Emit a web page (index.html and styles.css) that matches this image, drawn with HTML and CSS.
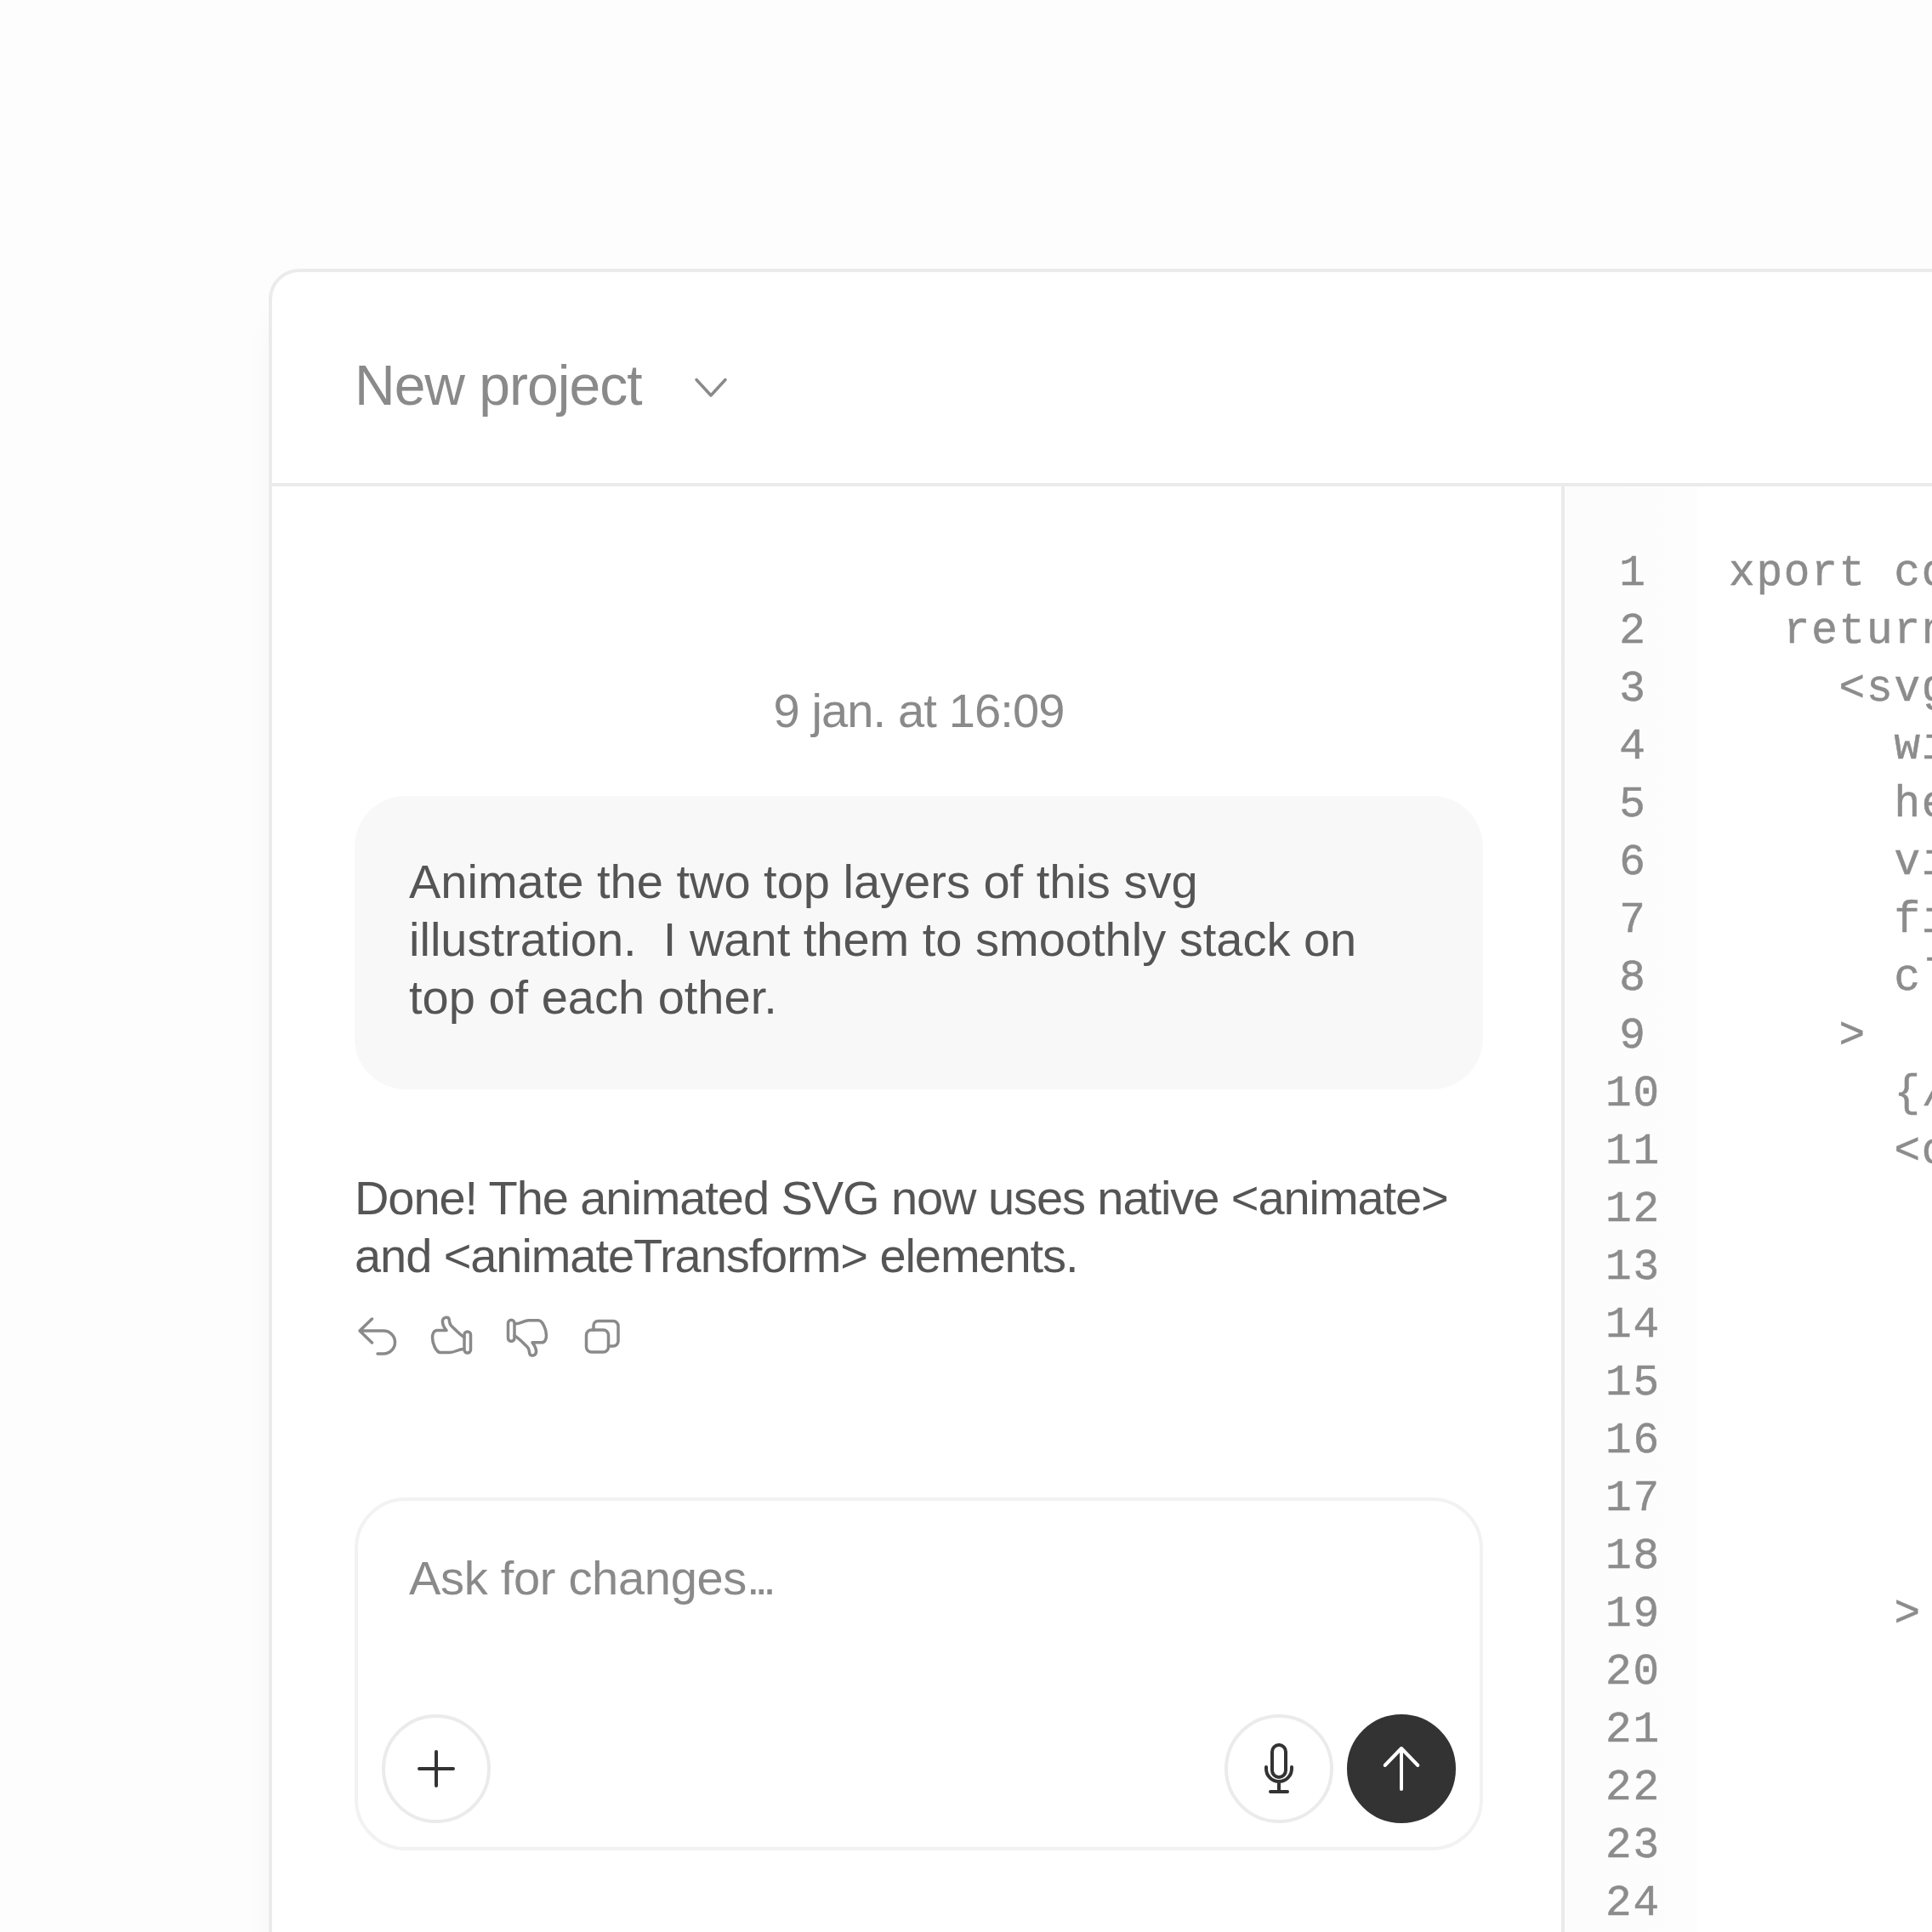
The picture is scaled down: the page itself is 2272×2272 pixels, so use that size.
FILE: index.html
```html
<!DOCTYPE html>
<html lang="en">
<head>
<meta charset="utf-8">
<title>New project</title>
<link rel="stylesheet" href="styles.css">
</head>
<body>
<div class="frame">
  <header class="topbar">
    <span class="project">New project</span>
    <svg class="chevron" viewBox="0 0 64 64" width="64" height="64" fill="none"><path d="M15 25.5L32 44L49 25.5"/></svg>
  </header>
  <div class="panes">
    <section class="chat">
      <div class="date">9 jan. at 16:09</div>
      <div class="bubble">Animate the two top layers of this svg<br>illustration.&nbsp; I want them to smoothly stack on<br>top of each other.</div>
      <p class="reply">Done! The animated SVG now uses native &lt;animate&gt;<br>and &lt;animateTransform&gt; elements.</p>
      <div class="actions">
        <svg class="act" viewBox="0 0 64 64" width="64" height="64" fill="none"><path d="M20.5 11L6 25L20.5 39M6 25H34a13.5 13.5 0 0 1 0 27H27"/></svg>
        <svg class="act" viewBox="0 0 64 64" width="64" height="64" fill="none"><path d="M20 24.5H9C5 24.5 3.5 29 3.5 33C3.5 40 8 50.5 13 50.5H24C30 50.5 34 46.5 40 46.5M20 24.5C18 22 15 17 15.5 13C16 9 22 8 23 11C24 14 23 17 26 19.5C31 24 36 30 41 32.5"/><rect x="41" y="26" width="7.5" height="25" rx="3.75"/></svg>
        <svg class="act" viewBox="0 0 64 64" width="64" height="64" fill="none"><g transform="translate(1 4.7) rotate(180 26 29.3)"><path d="M20 24.5H9C5 24.5 3.5 29 3.5 33C3.5 40 8 50.5 13 50.5H24C30 50.5 34 46.5 40 46.5M20 24.5C18 22 15 17 15.5 13C16 9 22 8 23 11C24 14 23 17 26 19.5C31 24 36 30 41 32.5"/><rect x="41" y="26" width="7.5" height="25" rx="3.75"/></g></svg>
        <svg class="act" viewBox="0 0 64 64" width="64" height="64" fill="none"><rect x="8.5" y="24" width="26" height="26" rx="6"/><path d="M17 24V19a5.5 5.5 0 0 1 5.5-5.5H40a6 6 0 0 1 6 6V37a6 6 0 0 1-6 6H34.5"/></svg>
      </div>
      <div class="composer">
        <div class="placeholder">Ask for changes<span class="dots">...</span></div>
        <div class="tools">
          <button class="round" type="button"><svg class="ink" viewBox="0 0 64 64" width="64" height="64" fill="none"><path d="M32 12V52M12 32H52"/></svg></button>
          <div class="tools-right">
            <button class="round" type="button"><svg class="ink" viewBox="0 0 64 64" width="64" height="64" fill="none"><rect x="24" y="4" width="16" height="38" rx="8"/><path d="M17 30V32a15 15 0 0 0 30 0V30M32 47V59M22 59H42"/></svg></button>
            <button class="round send" type="button"><svg class="ink-light" viewBox="0 0 64 64" width="64" height="64" fill="none"><path d="M32 8V56M12.7 28L32 8L51.3 28"/></svg></button>
          </div>
        </div>
      </div>
    </section>
    <section class="code">
      <div class="gutter">
        <div class="num">1</div><div class="num">2</div><div class="num">3</div><div class="num">4</div><div class="num">5</div><div class="num">6</div><div class="num">7</div><div class="num">8</div><div class="num">9</div><div class="num">10</div><div class="num">11</div><div class="num">12</div><div class="num">13</div><div class="num">14</div><div class="num">15</div><div class="num">16</div><div class="num">17</div><div class="num">18</div><div class="num">19</div><div class="num">20</div><div class="num">21</div><div class="num">22</div><div class="num">23</div><div class="num">24</div>
      </div>
<pre class="source">xport const
  return (
    &lt;svg
      width
      height
      viewBox
      fill
      className
    &gt;
      {/*
      &lt;circle







      &gt;</pre>
    </section>
  </div>
</div>
</body>
</html>
```

FILE: styles.css
```css
* { box-sizing: border-box; }
html, body { margin: 0; height: 2272px; overflow: hidden; background: #fdfdfd; }
body { padding: 316px 0 0 316px; font-family: "Liberation Sans", Arial, sans-serif; }
.frame {
  width: 2200px;
  height: 2200px;
  background: #fff;
  border: 4px solid #ebebeb;
  border-radius: 36px 0 0 0;
  box-shadow: -4px 44px 30px rgba(0, 0, 0, .022);
}
.topbar {
  height: 252px;
  display: flex;
  align-items: center;
  gap: 50px;
  padding: 18px 0 0 97px;
  border-bottom: 4px solid #ebebeb;
}
.project { font-size: 66px; letter-spacing: -1px; color: #8a8a8a; line-height: 80px; }
.chevron path { stroke: #8a8a8a; stroke-width: 3.5; stroke-linecap: round; stroke-linejoin: round; }
.panes { display: flex; align-items: stretch; height: 1900px; }
.chat {
  flex: none;
  width: 1520px;
  padding: 230px 92px 0 97px;
  border-right: 4px solid #ebebeb;
  font-size: 56px;
  letter-spacing: -1.08px;
  line-height: 68px;
}
.date { text-align: center; color: #8a8a8a; letter-spacing: -.85px; }
.bubble {
  margin-top: 66px;
  height: 345px;
  padding: 67px 64px 0;
  background: #f8f8f8;
  border-radius: 60px;
  color: #555;
  letter-spacing: 0;
}
.reply { margin: 94px 0 0; color: #555; }
.actions { display: flex; gap: 24px; margin-top: 29px; height: 64px; }
.act path, .act rect { stroke: #8a8a8a; stroke-width: 3.5; stroke-linecap: round; stroke-linejoin: round; }
.composer {
  margin-top: 157px;
  height: 415px;
  padding: 57px 28px 28px;
  border: 4px solid #f2f2f2;
  border-radius: 60px;
  display: flex;
  flex-direction: column;
  justify-content: space-between;
}
.placeholder { padding: 0 32px; color: #8a8a8a; letter-spacing: -.3px; }
.dots { letter-spacing: -6px; }
.tools { display: flex; justify-content: space-between; }
.tools-right { display: flex; gap: 16px; }
.round {
  width: 128px;
  height: 128px;
  padding: 0;
  display: flex;
  align-items: center;
  justify-content: center;
  background: #fff;
  border: 4px solid #ebebeb;
  border-radius: 50%;
}
.send { background: #333; border-color: #333; }
.ink path, .ink rect { stroke: #333; stroke-width: 4; stroke-linecap: round; stroke-linejoin: round; }
.ink-light path { stroke: #fff; stroke-width: 4; stroke-linecap: round; stroke-linejoin: round; }
.code {
  flex: 1;
  min-width: 0;
  display: flex;
  font-family: "Liberation Mono", "Courier New", monospace;
  font-size: 51px;
  letter-spacing: 1.8px;
  line-height: 68px;
  color: #8c8c8c;
  -webkit-text-stroke: .5px #8c8c8c;
}
.gutter {
  flex: none;
  width: 156px;
  padding: 69px 43px 0 48px;
  background: linear-gradient(90deg, #fcfcfc, #fdfdfd);
}
.num { text-align: center; }
.source { margin: 0; padding: 69px 0 0 37px; font: inherit; letter-spacing: inherit; }
```
